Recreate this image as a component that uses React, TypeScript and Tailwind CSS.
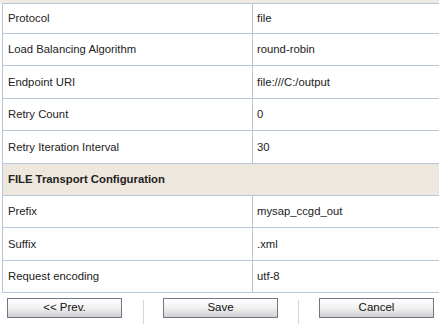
const rows: { label: string; value: string; h: string }[] = [
  { label: "Protocol", value: "file", h: "h-[30px]" },
  { label: "Load Balancing Algorithm", value: "round-robin", h: "h-[32px]" },
  { label: "Endpoint URI", value: "file:///C:/output", h: "h-[33px]" },
  { label: "Retry Count", value: "0", h: "h-[32px]" },
  { label: "Retry Iteration Interval", value: "30", h: "h-[33px]" },
];

const fileRows: { label: string; value: string; h: string }[] = [
  { label: "Prefix", value: "mysap_ccgd_out", h: "h-[32px]" },
  { label: "Suffix", value: ".xml", h: "h-[33px]" },
  { label: "Request encoding", value: "utf-8", h: "h-[32px]" },
];

function Row({ label, value, h }: { label: string; value: string; h: string }) {
  return (
    <div className={`flex ${h} border-b border-[#b9c5d8]`}>
      <div className="w-[249px] shrink-0 flex items-center pl-[5px]">{label}</div>
      <div className="flex-1 flex items-center pl-[4px] border-l border-[#b9c5d8]">{value}</div>
    </div>
  );
}

function Button({ label }: { label: string }) {
  return (
    <button className="w-[115px] h-[20px] border border-[#6e7888] bg-gradient-to-b from-[#ffffff] via-[#f1f1f1] to-[#cfcfcf] text-[11.5px] text-[#111] leading-none font-['Liberation_Sans',Arial,sans-serif]">
      {label}
    </button>
  );
}

export default function App() {
  return (
    <div className="w-[439px] h-[324px] bg-white overflow-hidden font-['Liberation_Sans',Arial,sans-serif] text-[11.3px] text-[#222]">
      <div className="h-[3px] bg-[#f0ebe1]" />
      <div className="ml-[2px] border-l border-t border-[#b9c5d8]">
        {rows.map((r) => (
          <Row key={r.label} {...r} />
        ))}
        <div className="flex items-center h-[32px] pl-[5px] bg-[#eee7dd] border-b border-[#b9c5d8] font-bold">
          FILE Transport Configuration
        </div>
        {fileRows.map((r) => (
          <Row key={r.label} {...r} />
        ))}
      </div>
      <div className="flex items-start pl-[7px] pt-[5px]">
        <Button label="<< Prev." />
        <div className="w-px h-[24px] bg-[#d6d6d6] ml-[21px] mr-[19px] mt-[2px]" />
        <Button label="Save" />
        <div className="w-px h-[24px] bg-[#d6d6d6] ml-[20px] mr-[20px] mt-[2px]" />
        <Button label="Cancel" />
      </div>
    </div>
  );
}
